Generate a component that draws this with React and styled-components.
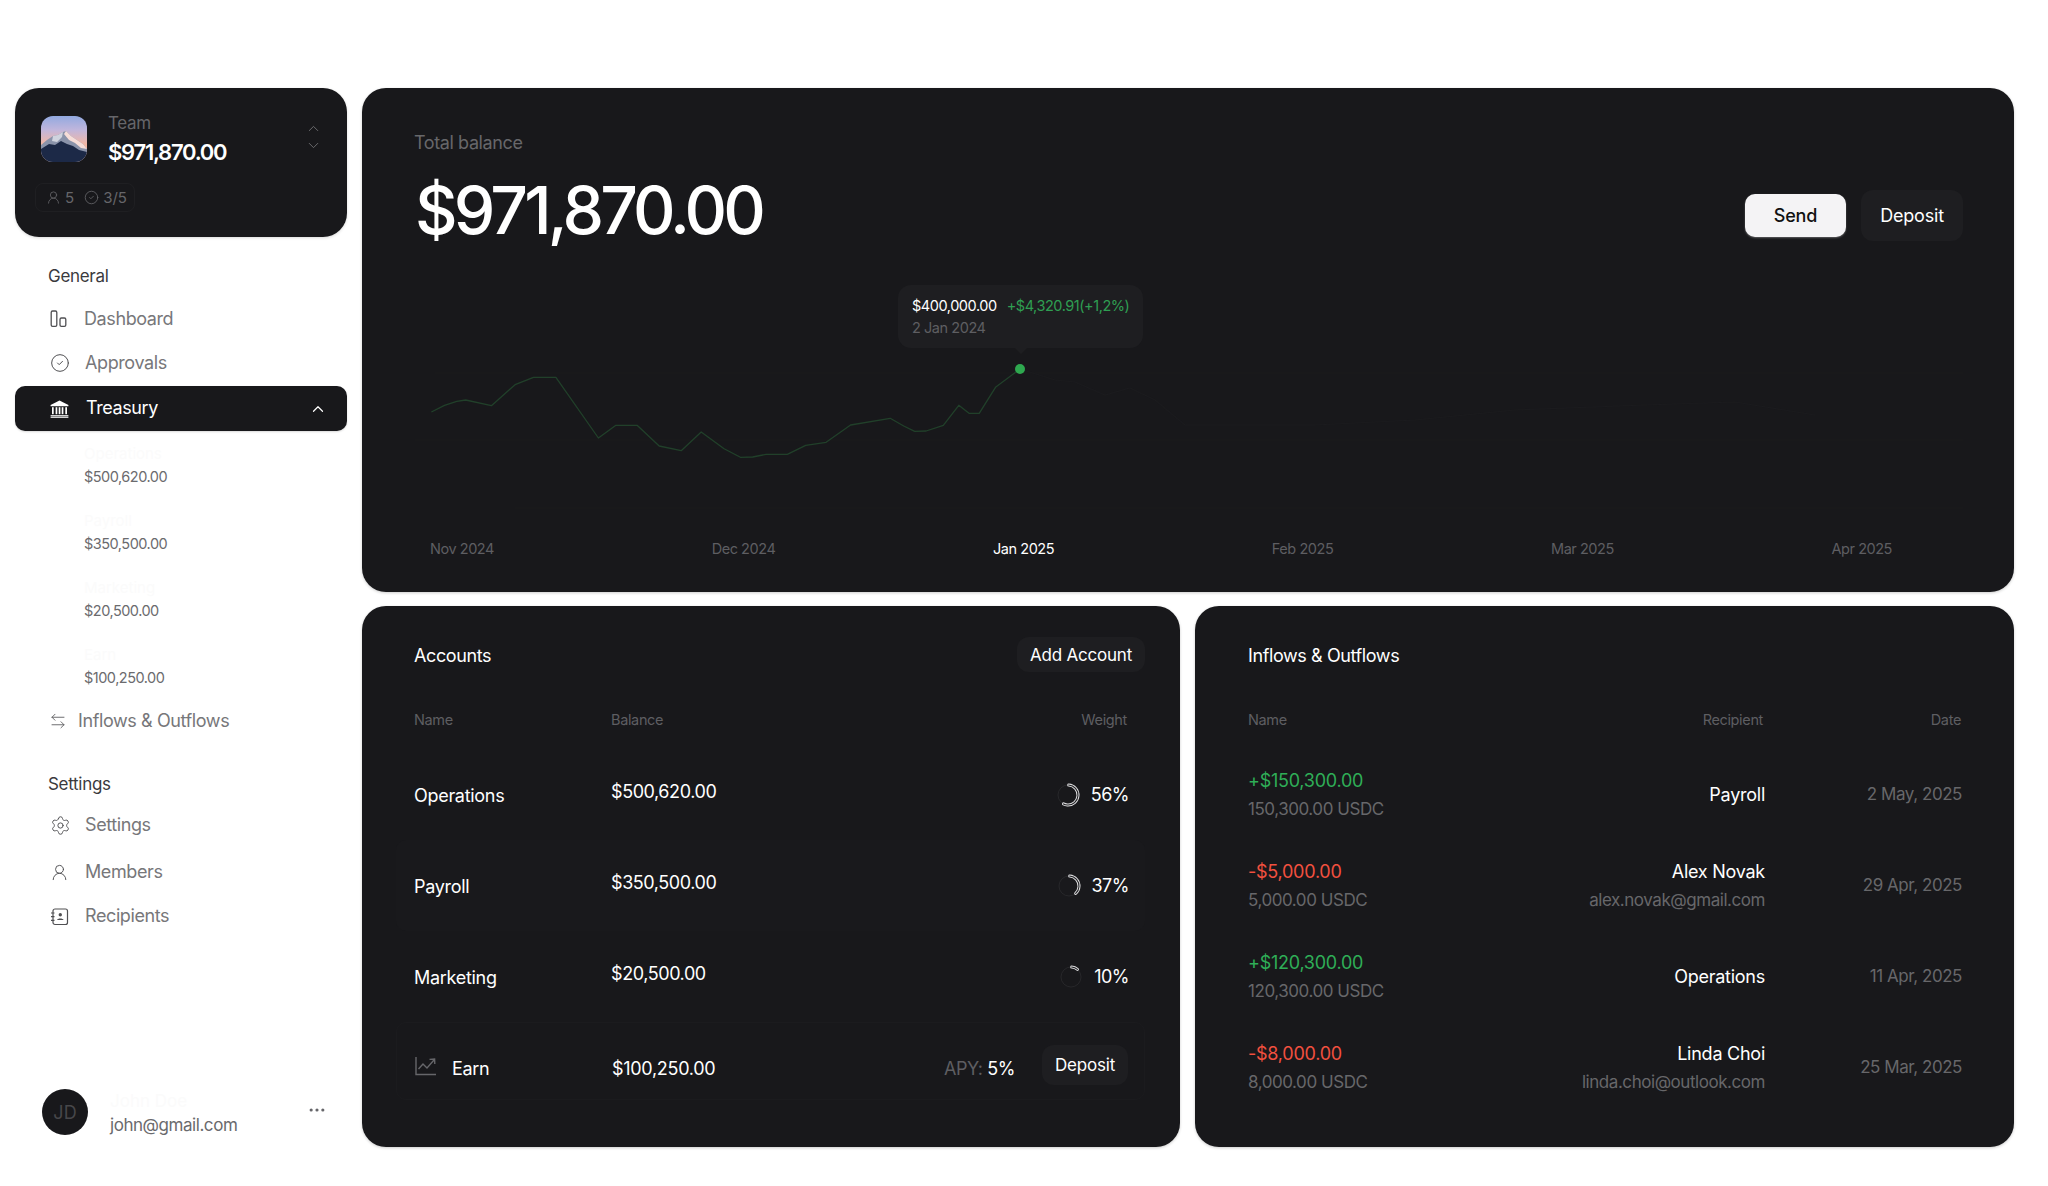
import React from "react";
import styled, { createGlobalStyle } from "styled-components";
import { ChevronUp, ChevronDown, CircleCheck, UserRound, ArrowLeftRight, Settings, Ellipsis } from "lucide-react";

const Global = createGlobalStyle`
  html, body { margin: 0; padding: 0; background: #fff; }
  body { font-family: "Inter", "Liberation Sans", sans-serif; -webkit-font-smoothing: antialiased; }
  * { box-sizing: border-box; }
`;

const Page = styled.div`
  display: flex; gap: 15px; width: 2048px; height: 1186px; padding: 88px 34px 39px 15px; overflow: hidden;
`;
const Sidebar = styled.aside`
  width: 332px; flex: none; display: flex; flex-direction: column;
`;
const TeamCard = styled.div`
  height: 149px; background: #18181b; border-radius: 24px; padding: 28px 25px 0 26px; position: relative;
  box-shadow: 0 1px 3px rgba(0,0,0,.15);
`;
const TeamTop = styled.div`display: flex; align-items: flex-start;`;
const Avatar = styled.div`
  width: 46px; height: 46px; border-radius: 12px; overflow: hidden; flex: none; svg { display: block; }
`;
const TeamText = styled.div`margin-left: 21px; flex: 1; display: flex; flex-direction: column;`;
const TeamLabel = styled.div`font-size: 17px; line-height: 22px; color: #66666a; margin-top: -4px; letter-spacing: -0.3px;`;
const TeamAmount = styled.div`font-size: 22px; line-height: 30px; font-weight: 600; color: #fff; letter-spacing: -1.25px; margin-top: 3px;`;
const Updown = styled.div`
  display: flex; flex-direction: column; gap: 1px; color: #77777a; margin-top: 5px; svg { display: block; margin-top: -1px; }
`;
const TeamBadge = styled.div`
  display: flex; align-items: center; gap: 4px; height: 29px; width: 100px; margin: 16px 0 0 -6px; padding-left: 10px;
  border: 1px solid #1f1f22; border-radius: 8px; font-size: 15px; color: #66666a;
  svg { flex: none; }
`;
const BadgeNum = styled.span`margin-right: 6px;`;

const SectionLabel = styled.div`
  font-size: 17px; line-height: 24px; color: #3a3a3d; padding-left: 33px; letter-spacing: -0.3px; margin-top: ${p => p.$top}px;
`;
const NavItem = styled.div`
  height: 44px; display: flex; align-items: center; padding-left: 35px; font-size: 18px; color: #77777a;
  letter-spacing: -0.4px; margin-top: ${p => p.$top || 0}px;
`;
const NavIcon = styled.span`
  width: ${p => p.$w || 35}px; flex: none; display: flex; align-items: center; color: #505053; margin-left: ${p => p.$shift || 0}px;
  svg { margin-top: 2px; }
`;
const ActiveItem = styled.div`
  height: 45px; margin-top: 2px; background: #18181b; color: #fff; border-radius: 10px; display: flex; align-items: center;
  padding: 0 20px 0 35px; font-size: 18px; justify-content: space-between; letter-spacing: -0.4px;
  box-shadow: 0 1px 2px rgba(0,0,0,.15);
`;
const ActiveLeft = styled.span`display: flex; align-items: center; gap: 17px; margin-top: -2px; svg { margin-top: 2px; }`;
const SubList = styled.div`display: flex; flex-direction: column; gap: 23px; padding: 12px 0 0 69px;`;
const SubItem = styled.div`display: flex; flex-direction: column; height: 44px;`;
const SubName = styled.div`font-size: 15px; line-height: 22px; color: #fbfbfb;`;
const SubAmount = styled.div`font-size: 14.5px; line-height: 22px; color: #6b6b6e; letter-spacing: -0.5px; padding-top: 1px;`;
const UserRow = styled.div`
  margin-top: auto; display: flex; align-items: flex-start; padding: 0 20px 10px 27px; position: relative;
`;
const UserAvatar = styled.div`
  width: 46px; height: 46px; border-radius: 50%; background: #18181b; color: #47474a; font-size: 18px;
  display: flex; align-items: center; justify-content: center; flex: none;
`;
const UserText = styled.div`margin-left: 22px; flex: 1; display: flex; flex-direction: column;`;
const UserName = styled.div`font-size: 17px; line-height: 24px; color: #fbfbfb;`;
const UserMail = styled.div`font-size: 17px; line-height: 24px; color: #6a6a6d; letter-spacing: -0.45px;`;
const Dots = styled.div`color: #66666a; margin-top: 11px; svg { display: block; }`;

const Main = styled.main`flex: 1; display: flex; flex-direction: column; gap: 14px; min-width: 0;`;
const Card = styled.section`
  background: #18181b; border-radius: 24px; box-shadow: 0 1px 3px rgba(0,0,0,.2);
`;
const TopCard = styled(Card)`height: 504px; padding: 43px 51px 0 53px;`;
const TopHead = styled.div`display: flex; justify-content: space-between; align-items: flex-start;`;
const TotalLabel = styled.div`font-size: 18px; line-height: 24px; color: #67676a; letter-spacing: -0.4px; margin-left: -1px;`;
const TotalAmount = styled.div`
  font-size: 66px; line-height: 80px; font-weight: 500; color: #fff; letter-spacing: -3.8px; margin-top: 15px; margin-bottom: -1px;
`;
const HeadButtons = styled.div`display: flex; gap: 15px; align-items: flex-start; margin-top: 59px;`;
const SendButton = styled.button`
  width: 101px; height: 43px; margin-top: 4px; border: none; border-radius: 10px; background: #f4f3f5; color: #111;
  font: 500 18px "Inter", sans-serif; box-shadow: 0 1px 2px rgba(255,255,255,.3); letter-spacing: -0.2px;
`;
const SoftButton = styled.button`
  border: none; background: #1e1e21; color: #fff; font-family: "Inter", sans-serif; font-weight: 400; padding: 0;
  font-size: ${p => p.$size || 17}px; width: ${p => p.$w}px; height: ${p => p.$h}px; border-radius: 12px; flex: none; letter-spacing: -0.2px;
`;
const ChartArea = styled.div`position: relative; height: 270px; margin-top: 11px;`;
const ChartSvg = styled.svg`position: absolute; inset: 0; width: 100%; height: 100%;`;
const ChartTip = styled.div`
  position: absolute; left: 483px; top: 25px; width: 245px; height: 63px; background: #1e1e21; border-radius: 13px;
  padding: 10px 14px; font-size: 14.5px; line-height: 22px;
  &::after {
    content: ""; position: absolute; left: 117px; bottom: -6px; width: 0; height: 0;
    border-left: 6px solid transparent; border-right: 6px solid transparent; border-top: 6px solid #1e1e21;
  }
`;
const TipTop = styled.div`display: flex; gap: 10px; white-space: nowrap; letter-spacing: -0.45px;`;
const TipValue = styled.span`color: #fff;`;
const TipGain = styled.span`color: #2f9e52;`;
const TipDate = styled.div`color: #5e5e62; letter-spacing: -0.45px;`;
const ChartDot = styled.div`
  position: absolute; left: 600px; top: 104px; width: 10px; height: 10px; border-radius: 50%; background: #2ea84f;
`;
const Axis = styled.div`
  display: flex; justify-content: space-between; padding: 0 71px 0 15px; margin-top: 9px;
`;
const AxisLabel = styled.span`
  font-size: 14.5px; line-height: 20px; letter-spacing: -0.45px; color: ${p => p.$on ? "#fff" : "#5e5e62"};
`;

const BottomRow = styled.div`display: grid; grid-template-columns: 818px 819px; gap: 15px; height: 541px;`;
const PanelHead = styled.div`
  display: flex; align-items: center; justify-content: space-between; height: 35px; margin-top: 31px; padding: 0 ${p => p.$right}px 0 ${p => p.$left}px;
`;
const PanelTitle = styled.h2`font-size: 18px; font-weight: 400; line-height: 24px; color: #fff; margin: 3px 0 0; letter-spacing: -0.4px;`;
const TableHead = styled.div`
  display: grid; grid-template-columns: ${p => p.$cols}; margin-top: 38px; padding: 0 53px 0 ${p => p.$left}px; font-size: 14.5px; line-height: 20px; color: #5e5e62; letter-spacing: -0.35px;
`;
const HeadRight = styled.span`text-align: right;`;
const Rows = styled.div`display: flex; flex-direction: column; margin: 19px 35px 0 34px;`;
const AccountRow = styled.div`
  display: grid; grid-template-columns: 197px 1fr auto; align-items: center; padding: ${p => p.$earn ? "14px 16px 0 18px" : "0 16px 0 18px"};
  height: ${p => p.$earn ? 78 : 91}px; border-radius: 10px; font-size: 18px; color: #fff; letter-spacing: -0.3px;
  background: ${p => p.$soft ? "#19191c" : "transparent"};
  border: ${p => p.$earn ? "1px solid #1b1b1e" : "none"};
`;
const NameCell = styled.span`padding-top: 1px;`;
const RaisedCell = styled.span`margin-bottom: 6px; letter-spacing: -0.42px;`;
const EarnName = styled.span`display: flex; align-items: center; gap: 15px; color: #fff; svg { margin-top: -4px; }`;
const WeightCell = styled.span`display: flex; align-items: center; gap: 11px; justify-content: flex-end; letter-spacing: -0.5px;`;
const EarnCell = styled.span`display: flex; align-items: center; gap: 27px;`;
const EarnButton = styled(SoftButton)`margin-bottom: 6px;`;
const Apy = styled.span`color: #5e5e62; letter-spacing: -0.4px; span { color: #fff; }`;

const Flows = styled.div`display: flex; flex-direction: column; margin: 19px 52px 0 53px;`;
const FlowRow = styled.div`
  display: grid; grid-template-columns: 1fr 300px 197px; align-items: center; height: 91px; font-size: 18px; letter-spacing: -0.25px;
`;
const Stack = styled.div`display: flex; flex-direction: column; align-items: ${p => p.$end ? "flex-end" : "flex-start"}; line-height: 29px;`;
const FlowAmount = styled.span`color: ${p => p.$in ? "#2fae57" : "#f2503f"};`;
const Muted = styled.span`color: #67676a; font-size: 17px; letter-spacing: -0.45px;`;
const Strong = styled.span`color: #fff;`;

function Mountain() {
  return (
    <svg width="46" height="46" viewBox="0 0 46 46">
      <defs>
        <linearGradient id="sky" x1="0" y1="0" x2="0" y2="1">
          <stop offset="0" stopColor="#92a9e0" />
          <stop offset=".3" stopColor="#c0b6dc" />
          <stop offset=".62" stopColor="#f3b7a4" />
        </linearGradient>
      </defs>
      <rect width="46" height="46" fill="url(#sky)" />
      <polygon points="0,29 6,24 12,20 17,19 22,16 25,15 30,20 36,24 42,28 46,33 46,46 0,46" fill="#8a93aa" />
      <polygon points="25,15 30,20 36,24 42,28 46,33 40,32 34,27 28,24 23,18" fill="#f6ddd8" />
      <polygon points="12,20 17,19 22,16 21,21 16,26 11,25" fill="#cfd3de" />
      <polygon points="0,33 8,28 14,29 20,25 26,28 32,30 38,34 46,36 46,46 0,46" fill="#1c2947" />
    </svg>
  );
}
const DashIcon = () => (
  <svg width="19" height="18" viewBox="0 0 19 18" fill="none" stroke="currentColor" strokeWidth="1.3">
    <rect x="1.2" y="1" width="5.6" height="15.4" rx="1.4" />
    <rect x="10" y="8" width="5.8" height="8.4" rx="1.4" />
  </svg>
);
const BankIcon = () => (
  <svg width="19" height="18" viewBox="0 0 19 18" fill="#fff">
    <path d="M9.5 .5 18.4 5v1.3H.6V5z" />
    <rect x="2" y="7.2" width="1.7" height="7" /><rect x="5.6" y="7.2" width="1.7" height="7" />
    <rect x="8.7" y="7.2" width="1.7" height="7" /><rect x="11.7" y="7.2" width="1.7" height="7" /><rect x="15.3" y="7.2" width="1.7" height="7" />
    <rect x=".6" y="15.2" width="17.8" height="1.3" /><rect x=".6" y="17" width="17.8" height=".8" />
  </svg>
);
const BookIcon = () => (
  <svg width="19" height="19" viewBox="0 0 19 19" fill="none" stroke="currentColor" strokeWidth="1.2">
    <rect x="3" y="2" width="14.5" height="15.5" rx="2" />
    <path d="M1 6h3.5M1 9.7h3.5M1 13.4h3.5" />
    <circle cx="10.3" cy="7.7" r="1.7" fill="currentColor" stroke="none" />
    <path d="M7 13c.6-2 5.9-2 6.6 0z" fill="currentColor" stroke="none" />
  </svg>
);
const EarnIcon = () => (
  <svg width="22" height="20" viewBox="0 0 22 20" fill="none" stroke="#66666a" strokeWidth="1.4">
    <path d="M1 1v17.5h20" />
    <path d="M3.5 13 8 8l4 4 7-8" />
    <path d="M14.5 3.4 19.6 3l.2 5" />
  </svg>
);

function Ring({ value }) {
  const r = 10, c = 2 * Math.PI * r, len = c * value / 100;
  return (
    <svg width="24" height="24" viewBox="0 0 24 24" fill="none">
      <circle cx="12" cy="12" r={r} stroke="#27272a" strokeWidth="1" />
      <g transform="rotate(-86 12 12)">
        <circle cx="12" cy="12" r={r} stroke="#dedee0" strokeWidth="3" strokeLinecap="round" strokeDasharray={`${len} ${c}`} />
        <circle cx="12" cy="12" r={r} stroke="#1e1e21" strokeWidth="1.1" strokeLinecap="round" strokeDasharray={`${len} ${c}`} />
      </g>
    </svg>
  );
}

const zoomPts = [[28,396],[60,376],[90,364],[112,360],[175,377],[233,314],[278,292],[333,292],[437,474],[480,436],[532,436],[586,498],[640,512],[689,456],[745,506],[785,532],[815,531],[848,523],[900,523],[945,496],[995,487],[1055,435],[1152,415],[1185,438],[1212,454],[1240,453],[1282,436],[1320,376],[1345,400],[1370,400],[1410,322],[1469,268]];
const toChart = ([x, y]) => `${(420 + x / 2.45 - 415).toFixed(1)},${(280 + y / 3 - 260).toFixed(1)}`;
const linePts = zoomPts.map(toChart).join(" ");
const fadePts = "605,109 640,120 660,122 690,135 715,128 740,140 770,165 900,165 1000,160 1100,150 1230,145 1320,142 1400,155";

const accounts = [
  { name: "Operations", bal: "$500,620.00", w: 56, soft: false },
  { name: "Payroll", bal: "$350,500.00", w: 37, soft: true },
  { name: "Marketing", bal: "$20,500.00", w: 10, soft: false },
];
const flows = [
  { a: "+$150,300.00", s: "150,300.00 USDC", up: true, r: "Payroll", d: "2 May, 2025" },
  { a: "-$5,000.00", s: "5,000.00 USDC", up: false, r: "Alex Novak", m: "alex.novak@gmail.com", d: "29 Apr, 2025" },
  { a: "+$120,300.00", s: "120,300.00 USDC", up: true, r: "Operations", d: "11 Apr, 2025" },
  { a: "-$8,000.00", s: "8,000.00 USDC", up: false, r: "Linda Choi", m: "linda.choi@outlook.com", d: "25 Mar, 2025" },
];
const subs = [["Operations", "$500,620.00"], ["Payroll", "$350,500.00"], ["Marketing", "$20,500.00"], ["Earn", "$100,250.00"]];
const months = ["Nov 2024", "Dec 2024", "Jan 2025", "Feb 2025", "Mar 2025", "Apr 2025"];

export default function App() {
  return (
    <Page>
      <Global />
      <Sidebar>
        <TeamCard>
          <TeamTop>
            <Avatar><Mountain /></Avatar>
            <TeamText>
              <TeamLabel>Team</TeamLabel>
              <TeamAmount>$971,870.00</TeamAmount>
            </TeamText>
            <Updown>
              <ChevronUp size={17} strokeWidth={1.2} />
              <ChevronDown size={17} strokeWidth={1.2} />
            </Updown>
          </TeamTop>
          <TeamBadge>
            <UserRound size={15} strokeWidth={1.3} /><BadgeNum>5</BadgeNum>
            <CircleCheck size={15} strokeWidth={1.3} /><span>3/5</span>
          </TeamBadge>
        </TeamCard>

        <SectionLabel $top={27}>General</SectionLabel>
        <NavItem $top={8}><NavIcon $w={34}><DashIcon /></NavIcon>Dashboard</NavItem>
        <NavItem><NavIcon><CircleCheck size={20} strokeWidth={1.2} /></NavIcon>Approvals</NavItem>
        <ActiveItem>
          <ActiveLeft><BankIcon />Treasury</ActiveLeft>
          <ChevronUp size={18} strokeWidth={1.6} />
        </ActiveItem>
        <SubList>
          {subs.map(([n, v]) => (
            <SubItem key={n}><SubName>{n}</SubName><SubAmount>{v}</SubAmount></SubItem>
          ))}
        </SubList>
        <NavItem $top={10}><NavIcon $w={29} $shift={-1}><ArrowLeftRight size={18} strokeWidth={1.1} /></NavIcon>Inflows &amp; Outflows</NavItem>
        <SectionLabel $top={30}>Settings</SectionLabel>
        <NavItem $top={6}><NavIcon><Settings size={21} strokeWidth={1.1} /></NavIcon>Settings</NavItem>
        <NavItem $top={3}><NavIcon><UserRound size={19} strokeWidth={1.2} /></NavIcon>Members</NavItem>
        <NavItem><NavIcon><BookIcon /></NavIcon>Recipients</NavItem>

        <UserRow>
          <UserAvatar>JD</UserAvatar>
          <UserText><UserName>John Doe</UserName><UserMail>john@gmail.com</UserMail></UserText>
          <Dots><Ellipsis size={20} strokeWidth={1.8} /></Dots>
        </UserRow>
      </Sidebar>

      <Main>
        <TopCard>
          <TopHead>
            <div>
              <TotalLabel>Total balance</TotalLabel>
              <TotalAmount>$971,870.00</TotalAmount>
            </div>
            <HeadButtons>
              <SendButton>Send</SendButton>
              <SoftButton $size={18} $w={102} $h={51}>Deposit</SoftButton>
            </HeadButtons>
          </TopHead>
          <ChartArea>
            <ChartSvg viewBox="0 0 1548 270" fill="none">
              <path d="M20 113H1548M0 180H1548M100 248H1548" stroke="#1a1a1d" strokeWidth="1" />
              <polyline points={fadePts} stroke="#1b1b1e" strokeWidth="1.2" />
              <polyline points={linePts} stroke="#21402a" strokeWidth="1.3" strokeLinejoin="round" />
            </ChartSvg>
            <ChartDot />
            <ChartTip>
              <TipTop><TipValue>$400,000.00</TipValue><TipGain>+$4,320.91(+1,2%)</TipGain></TipTop>
              <TipDate>2 Jan 2024</TipDate>
            </ChartTip>
          </ChartArea>
          <Axis>
            {months.map(m => <AxisLabel key={m} $on={m === "Jan 2025"}>{m}</AxisLabel>)}
          </Axis>
        </TopCard>

        <BottomRow>
          <Card>
            <PanelHead $right={35} $left={52}>
              <PanelTitle>Accounts</PanelTitle>
              <SoftButton $w={128} $h={35}>Add Account</SoftButton>
            </PanelHead>
            <TableHead $cols="197px 1fr auto" $left={52}><span>Name</span><span>Balance</span><HeadRight>Weight</HeadRight></TableHead>
            <Rows>
              {accounts.map(a => (
                <AccountRow key={a.name} $soft={a.soft}>
                  <NameCell>{a.name}</NameCell>
                  <RaisedCell>{a.bal}</RaisedCell>
                  <WeightCell><Ring value={a.w} />{a.w}%</WeightCell>
                </AccountRow>
              ))}
              <AccountRow $earn>
                <EarnName><EarnIcon />Earn</EarnName>
                <span>$100,250.00</span>
                <EarnCell>
                  <Apy>APY: <span>5%</span></Apy>
                  <EarnButton $w={86} $h={40}>Deposit</EarnButton>
                </EarnCell>
              </AccountRow>
            </Rows>
          </Card>
          <Card>
            <PanelHead $right={53} $left={53}><PanelTitle>Inflows &amp; Outflows</PanelTitle></PanelHead>
            <TableHead $cols="1fr 300px 198px" $left={53}><span>Name</span><HeadRight>Recipient</HeadRight><HeadRight>Date</HeadRight></TableHead>
            <Flows>
              {flows.map(f => (
                <FlowRow key={f.a}>
                  <Stack>
                    <FlowAmount $in={f.up}>{f.a}</FlowAmount>
                    <Muted>{f.s}</Muted>
                  </Stack>
                  <Stack $end>
                    <Strong>{f.r}</Strong>
                    {f.m && <Muted>{f.m}</Muted>}
                  </Stack>
                  <Stack $end><Muted>{f.d}</Muted></Stack>
                </FlowRow>
              ))}
            </Flows>
          </Card>
        </BottomRow>
      </Main>
    </Page>
  );
}
